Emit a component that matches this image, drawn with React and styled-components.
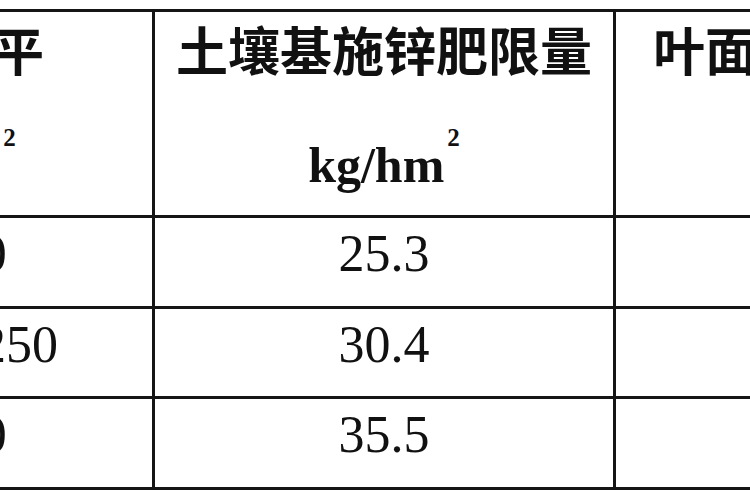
import React from "react";
import styled, { createGlobalStyle } from "styled-components";

const Global = createGlobalStyle`
  html, body { margin: 0; padding: 0; background: #fff; }
  body { overflow: hidden; }
`;

const Viewport = styled.div`
  width: 750px;
  height: 500px;
  overflow: hidden;
  background: #fff;
  padding-top: 9px;
  box-sizing: border-box;
`;

const Table = styled.div`
  display: grid;
  grid-template-columns: 424px 458px 490px;
  grid-template-rows: 203px 88px 87px 88px;
  gap: 3px;
  padding: 3px;
  width: max-content;
  background: #151515;
  margin-left: -275px;
  font-family: "Liberation Serif", "Noto Sans CJK SC", serif;
  color: #111;
`;

const Cell = styled.div`
  background: #fff;
  display: flex;
  flex-direction: column;
  align-items: center;
  box-sizing: border-box;
  padding-top: 6px;
`;

const HeadTitle = styled.div`
  font-family: "Noto Sans CJK SC", sans-serif;
  font-weight: 700;
  font-size: 52px;
  line-height: 62px;
  white-space: nowrap;
`;

const Unit = styled.div`
  font-family: "Liberation Serif", serif;
  font-weight: 700;
  font-size: 50px;
  line-height: 60px;
  margin-top: 55px;
  white-space: nowrap;
`;

const Sup = styled.span`
  font-size: 25px;
  line-height: 0;
  vertical-align: 36px;
  margin-left: 3px;
`;

const Value = styled.div`
  font-family: "Liberation Serif", serif;
  font-size: 52px;
  line-height: 60px;
  white-space: nowrap;
`;

const headers = [
  { title: "产量水平", unit: "kg/hm", sup: "2" },
  { title: "土壤基施锌肥限量", unit: "kg/hm", sup: "2" },
  { title: "叶面喷施锌肥浓度", unit: "%", sup: "" },
];

const rows = [
  ["<7500", "25.3", "0.1"],
  ["7500~9250", "30.4", "0.2"],
  [">9250", "35.5", "0.3"],
];

export default function App() {
  return (
    <>
      <Global />
      <Viewport>
        <Table>
          {headers.map((h, i) => (
            <Cell key={"h" + i}>
              <HeadTitle>{h.title}</HeadTitle>
              <Unit>
                {h.unit}
                {h.sup && <Sup>{h.sup}</Sup>}
              </Unit>
            </Cell>
          ))}
          {rows.map((r, ri) =>
            r.map((v, ci) => (
              <Cell key={ri + "-" + ci}>
                <Value>{v}</Value>
              </Cell>
            ))
          )}
        </Table>
      </Viewport>
    </>
  );
}
